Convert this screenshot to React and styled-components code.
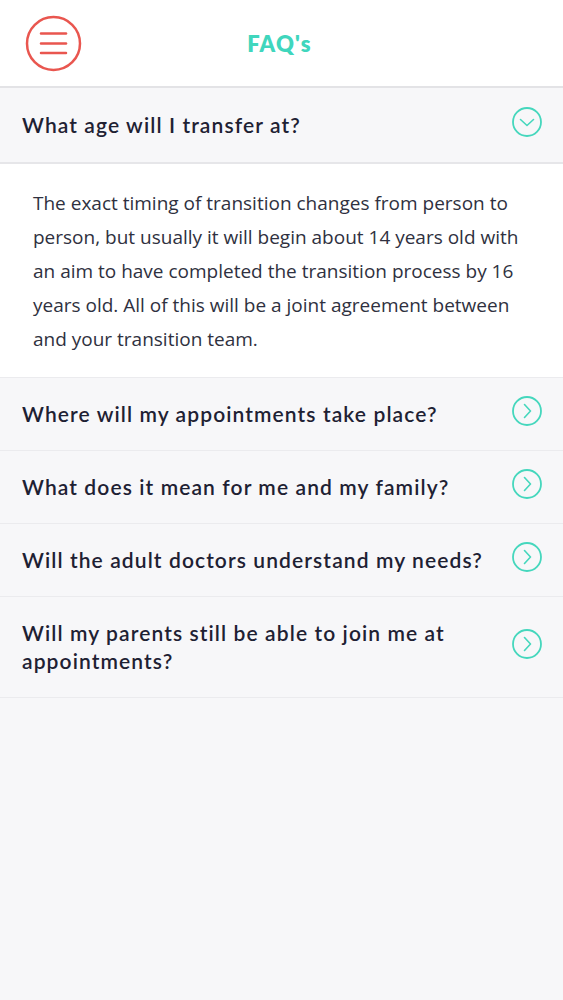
import React from "react";
import styled, { createGlobalStyle } from "styled-components";

const Global = createGlobalStyle`
  html, body { margin: 0; padding: 0; background: #f7f7f9; }
  * { box-sizing: border-box; }
`;

const Page = styled.div`
  width: 563px;
  min-height: 1000px;
  background: #f7f7f9;
  font-family: "Lato", "Noto Sans", sans-serif;
`;

const Header = styled.header`
  height: 88px;
  background: #fff;
  border-bottom: 2px solid #e3e3e6;
  display: grid;
  grid-template-columns: 110px 1fr 110px;
  align-items: center;
`;

const MenuButton = styled.button`
  margin-left: 25px;
  width: 57px;
  height: 57px;
  padding: 0;
  border: none;
  background: none;
  display: flex;
  align-items: center;
  justify-content: center;
`;

const Title = styled.h1`
  margin: 0;
  text-align: center;
  font-family: "Lato", sans-serif;
  font-weight: 800;
  font-size: 22px;
  letter-spacing: 1.2px;
  color: #40d6bd;
  margin-left: -4px;
`;

const Row = styled.div`
  display: flex;
  align-items: center;
  gap: 8px;
  background: #f7f7f9;
  padding: ${(p) => (p.$open ? "23px 22px" : "22px 22px")};
  border-bottom: ${(p) => (p.$open ? "2px solid #e6e6e9" : "1px solid #ebebee")};
`;

const Question = styled.div`
  flex: 1 1 auto;
  min-width: 0;
  font-family: "Lato", sans-serif;
  font-weight: 600;
  font-size: 21px;
  line-height: 28px;
  color: #1e2133;
  letter-spacing: 1.1px;
`;

const Answer = styled.div`
  background: #fff;
  padding: 22px 28px 21px 33px;
  font-family: "Open Sans", sans-serif;
  font-size: 19px;
  line-height: 34px;
  color: #2f3140;
  border-bottom: 1px solid #ebebee;
`;

const IconWrap = styled.div`
  flex: none;
  width: 32px;
  height: 32px;
  margin: ${(p) => `${p.$top}px -2px ${-4 - p.$top}px 0`};
`;

const MenuIcon = () => (
  <svg width="57" height="57" viewBox="0 0 57 57">
    <circle cx="28.5" cy="28.5" r="26.5" fill="none" stroke="#e9564f" strokeWidth="2.5" />
    <g stroke="#e9564f" strokeWidth="2.5" strokeLinecap="round">
      <line x1="16" y1="18.5" x2="41" y2="18.5" />
      <line x1="16" y1="28.5" x2="41" y2="28.5" />
      <line x1="16" y1="38" x2="41" y2="38" />
    </g>
  </svg>
);

const CircleChevron = ({ down }) => (
  <svg width="32" height="32" viewBox="0 0 32 32">
    <circle cx="16" cy="16" r="14" fill="none" stroke="#45d7bd" strokeWidth="1.8" />
    {down ? (
      <polyline points="9.5,13.5 16,19.5 22.5,13.5" fill="none" stroke="#45d7bd" strokeWidth="1.6" strokeLinecap="round" strokeLinejoin="round" />
    ) : (
      <polyline points="13.5,9.5 19.5,16 13.5,22.5" fill="none" stroke="#45d7bd" strokeWidth="1.6" strokeLinecap="round" strokeLinejoin="round" />
    )}
  </svg>
);

const faqs = [
  "Where will my appointments take place?",
  "What does it mean for me and my family?",
  "Will the adult doctors understand my needs?",
  "Will my parents still be able to join me at appointments?",
];

export default function App() {
  return (
    <Page>
      <Global />
      <Header>
        <MenuButton aria-label="menu">
          <MenuIcon />
        </MenuButton>
        <Title>FAQ's</Title>
        <div />
      </Header>
      <Row $open>
        <Question>What age will I transfer at?</Question>
        <IconWrap $top={-5}>
          <CircleChevron down />
        </IconWrap>
      </Row>
      <Answer>
        The exact timing of transition changes from person to person, but usually it will begin about 14 years old with an aim to have completed the transition process by 16 years old. All of this will be a joint agreement between and your transition team.
      </Answer>
      {faqs.map((q) => (
        <Row key={q}>
          <Question>{q}</Question>
          <IconWrap $top={-5.5}>
            <CircleChevron />
          </IconWrap>
        </Row>
      ))}
    </Page>
  );
}
